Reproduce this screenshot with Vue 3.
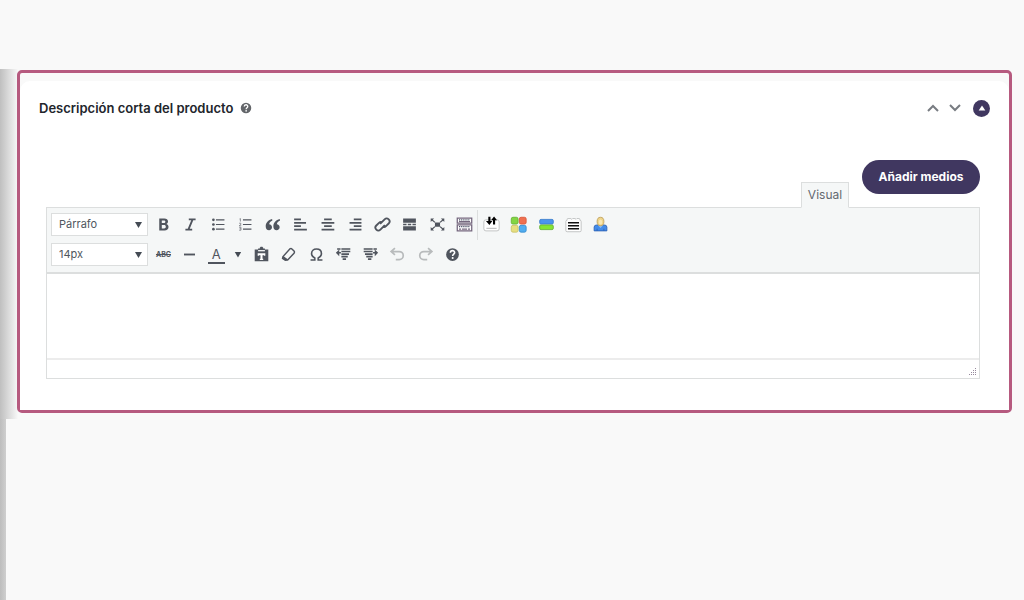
<script setup>
import { ref } from 'vue'

const format = ref('Párrafo')
const size = ref('14px')
const content = ref('')

const mainTools = [
  { id: 'bold', label: 'Negrita' },
  { id: 'italic', label: 'Cursiva' },
  { id: 'bullets', label: 'Lista con viñetas' },
  { id: 'numbers', label: 'Lista numerada' },
  { id: 'quote', label: 'Cita' },
  { id: 'left', label: 'Alinear a la izquierda' },
  { id: 'center', label: 'Centrar' },
  { id: 'right', label: 'Alinear a la derecha' },
  { id: 'link', label: 'Insertar enlace' },
  { id: 'more', label: 'Leer más' },
  { id: 'full', label: 'Pantalla completa' },
  { id: 'keyboard', label: 'Alternar barra' }
]
const extraTools = [
  { id: 'toggle', label: 'Acordeón' },
  { id: 'blocks', label: 'Bloques' },
  { id: 'bars', label: 'Botones' },
  { id: 'tabs', label: 'Pestañas' },
  { id: 'user', label: 'Autor' }
]
const textTools = [
  { id: 'strike', label: 'Tachado' },
  { id: 'line', label: 'Línea horizontal' }
]
const editTools = [
  { id: 'paste', label: 'Pegar como texto' },
  { id: 'eraser', label: 'Borrar formato' },
  { id: 'omega', label: 'Carácter especial' },
  { id: 'outdent', label: 'Reducir sangría' },
  { id: 'indent', label: 'Aumentar sangría' },
  { id: 'undo', label: 'Deshacer' },
  { id: 'redo', label: 'Rehacer' },
  { id: 'help', label: 'Ayuda' }
]

const shapes = {
  bold: '<path d="M5 3h6c2.600 0 4.300 1.200 4.300 3.500 0 1.500-.7 2.500-1.900 2.900 1.600.5 2.500 1.700 2.500 3.500 0 2.600-1.900 4.100-4.700 4.100H5zM8 5.300v3h2.300c1.200 0 1.900-.5 1.900-1.500s-.7-1.500-1.900-1.500zm0 5.200v4.100h2.700c1.300 0 2-.7 2-2s-.7-2.100-2-2.100z" fill="currentColor"/>',
  italic: '<path d="M8 4h8M4 16h8M12.500 4l-5 12" stroke="currentColor" stroke-width="2.200" fill="none"/>',
  bullets: '<path d="M7 4.500h10M7 10h10M7 15.500h10" stroke="currentColor" stroke-width="1.300"/><g fill="currentColor"><circle cx="4" cy="4.500" r="1.600"/><circle cx="4" cy="10" r="1.600"/><circle cx="4" cy="15.500" r="1.600"/></g>',
  numbers: '<path d="M7 4.500h10M7 10h10M7 15.500h10" stroke="currentColor" stroke-width="1.300"/><path d="M3 3.500l1-.5v3.500M2.500 8.500h2v1.400l-2 1.600H5M2.500 13.300h2.200v3.400H2.500M3 15h1.700" stroke="#7c8087" fill="none"/>',
  quote: '<path d="M9.500 3.500C5 4.500 2 8 2 12c0 2.800 1.500 4.700 3.900 4.700 2 0 3.500-1.500 3.500-3.500s-1.400-3.400-3.300-3.500c.3-2 1.600-3.400 3.800-4.400zM18.500 3.500C14 4.500 11 8 11 12c0 2.800 1.500 4.700 3.900 4.700 2 0 3.500-1.500 3.500-3.500s-1.400-3.400-3.300-3.500c.3-2 1.600-3.400 3.800-4.400z" fill="currentColor"/>',
  left: '<path d="M2.500 4h8M2.500 8h14M2.500 12h8M2.500 16h15" stroke="currentColor" stroke-width="2"/>',
  center: '<path d="M6 4h9M3 8h15M6 12h9M3 16h15" stroke="currentColor" stroke-width="2"/>',
  right: '<path d="M8 4h9M3 8h14M8 12h9M3 16h14" stroke="currentColor" stroke-width="2"/>',
  link: '<g transform="rotate(-45 10 10)" fill="none" stroke="currentColor" stroke-width="2.200"><path d="M11.500 12.500H4a3.400 3.400 0 0 1 0-6.800h4.500a3.400 3.400 0 0 1 3.300 2.500M8.500 7.500H16a3.400 3.400 0 0 1 0 6.800h-4.500a3.400 3.400 0 0 1-3.300-2.500"/></g>',
  more: '<path d="M2.500 3h15v5h-15zM2.500 12h15v5h-15z" fill="currentColor"/><path d="M2.500 10h4M8 10h4M13.500 10h4" stroke="currentColor" stroke-width="1.500"/>',
  full: '<path d="M7 7.500h6v5H7zM2 3h4L2 7zM18 3v4l-4-4zM2 17v-4l4 4zM18 17h-4l4-4z" fill="currentColor"/><path d="M3 4l4 3.500M17 4l-4 3.500M3 16l4-3.500M17 16l-4-3.500" stroke="currentColor" stroke-width="1.500"/>',
  keyboard: '<path d="M1.500 2.500h17v6h-17zM1.500 10.500h17v7h-17z" fill="#fff" stroke="#75677e" stroke-width="1.500"/><path d="M3.500 4.500h13M3.500 12.500h13" stroke="#4c5266" stroke-width="1.500" stroke-dasharray="1.500 1"/><path d="M3.500 6.700h13M3.500 15.500h2.500M7 15.500h6M14 15.500h2.500" stroke="#75677e" stroke-width="1.500"/>',
  toggle: '<rect x="1" y="4.500" width="18" height="13" rx="2.500" fill="#fff" stroke="#b9bcbc"/><path d="M4 14.500h12" stroke="#aaa"/><path d="M7.500 1v6M13 10V4" stroke="#000" stroke-width="2.500"/><path d="M3.500 6h7.500L7.500 10.500zM9.500 5h7L13 .5z" fill="#000"/>',
  blocks: '<rect x="1.500" y="1.500" width="8" height="8" rx="2" fill="#83d544" stroke="#64b332"/><rect x="11" y="1.500" width="8" height="8" rx="2" fill="#ef7050" stroke="#d95738"/><rect x="1.500" y="11" width="8" height="8" rx="2" fill="#e7df80" stroke="#c9c369"/><rect x="11" y="11" width="8" height="8" rx="2" fill="#50adf0" stroke="#358dce"/>',
  bars: '<rect x="2" y="4" width="16" height="5.500" rx="1.500" fill="#4a94ef" stroke="#367ccc"/><rect x="2" y="10.500" width="16" height="5.500" rx="1.500" fill="#85e533" stroke="#65af36"/>',
  tabs: '<path d="M1 6.500q0-1.500 1.500-1.500V4q0-1 1-1H7l1 1 1-1h3l1 1 1-1h2.500q1 0 1 1v1q1.500 0 1.500 1.500V17q0 1.500-1.500 1.500h-15Q1 18.500 1 17z" fill="#fff" stroke="#b9bcbc"/><path d="M3.500 8h13M3.500 11.500h13M3.500 15h13" stroke="#111" stroke-width="1.600"/>',
  user: '<path d="M2.500 17.500V13q0-2.500 3.500-2.500h8q3.500 0 3.500 2.500v4.500z" fill="#448ce9" stroke="#2d62b5"/><path d="M7 11l3 3 3-3" fill="#8ac0fa"/><path d="M6 15v2.500M14 15v2.500" stroke="#2d62b5"/><ellipse cx="10" cy="6.500" rx="4" ry="5" fill="#efd58a" stroke="#bd9e5a"/><ellipse cx="10" cy="7" rx="2" ry="3" fill="#fae8b5"/>',
  line: '<path d="M3.500 10h13" stroke="currentColor" stroke-width="2.200"/>',
  paste: '<path d="M2 4h4V3h2V2l1-1h2l1 1v1h2v1h4v14H2z" fill="currentColor"/><path d="M6 5.500h8" stroke="#f5f7f7" stroke-width="1.500"/><path d="M5.500 8.500h9v3H13V11h-1.800v4H12v1.500H8V15h.8v-4H7v.5H5.500z" fill="#fff"/>',
  eraser: '<path d="M3.500 12.500L11.500 3.500q1.500-1 2.500 0l2.500 2.500q1 1 0 2.500L9 16.500H6l-3-2z" fill="none" stroke="currentColor" stroke-width="1.700"/><path d="M3.500 11.500l6 4.500-3 1.500-3.500-3z" fill="currentColor"/>',
  omega: '<path d="M3 16.500h5V14C5.500 12.800 4.200 11 4.200 8.700c0-3 2.300-5.200 5.800-5.200s5.800 2.200 5.800 5.200c0 2.300-1.300 4.100-3.800 5.300v2.500h5" fill="none" stroke="currentColor" stroke-width="1.900"/>',
  outdent: '<path d="M7.500 3.500H18M7.500 6.500H18M7.500 9.500h9M7.500 12.500h7.500M9 15.500h4M3 8h4M2.500 3.500h4" stroke="currentColor" stroke-width="1.900"/><path d="M1 8l4-4v8z" fill="currentColor"/>',
  indent: '<path d="M2 3.500h10.500M2 6.500h10.500M3.500 9.500h9M5 12.500h7.500M7 15.500h4M13 8h4M13.500 3.500h4" stroke="currentColor" stroke-width="1.900"/><path d="M19 8l-4-4v8z" fill="currentColor"/>',
  undo: '<path d="M7 2.500l-4.500 4L7 10.500M3 6.500h9a4.700 4.700 0 0 1 0 9.500H8" fill="none" stroke="#b8bbbc" stroke-width="2"/>',
  redo: '<path d="M13 2.500l4.500 4-4.500 4M17 6.500H8A4.700 4.700 0 0 0 8 16h4" fill="none" stroke="#b8bbbc" stroke-width="2"/>',
  help: '<circle cx="10" cy="10" r="7.500" fill="currentColor"/><path d="M7.500 8c0-3.500 5-3.300 5-.3 0 2-2.300 1.900-2.300 4" fill="none" stroke="#fff" stroke-width="1.900"/><circle cx="10.200" cy="14" r="1.200" fill="#fff"/>'
}
</script>

<template>
  <main class="page">
    <section class="stage">
      <article class="frame">
        <div class="panel">
          <header class="heading">
            <h2>Descripción corta del producto</h2>
            <button class="hint" aria-label="Información">
              <svg viewBox="0 0 20 20" v-html="shapes.help"></svg>
            </button>
            <div class="order">
              <button aria-label="Subir"><svg viewBox="0 0 12 12"><path d="M1 9l5-5 5 5" /></svg></button>
              <button aria-label="Bajar"><svg viewBox="0 0 12 12"><path d="M1 3l5 5 5-5" /></svg></button>
              <button class="collapse" aria-label="Contraer"><svg viewBox="0 0 12 12"><path d="M6 3l4 6H2z" /></svg></button>
            </div>
          </header>

          <div class="editor">
            <div class="actions">
              <button class="tab">Visual</button>
              <button class="media">Añadir medios</button>
            </div>
            <div class="box">
              <div class="toolbar">
                <div class="row">
                  <label class="picker">
                    <select v-model="format" aria-label="Formato"><option>Párrafo</option></select>
                  </label>
                  <div class="tools main-tools">
                    <button v-for="tool in mainTools" :key="tool.id" :aria-label="tool.label">
                      <svg viewBox="0 0 20 20" v-html="shapes[tool.id]"></svg>
                    </button>
                  </div>
                  <div class="tools extra-tools">
                    <button v-for="tool in extraTools" :key="tool.id" :aria-label="tool.label">
                      <svg viewBox="0 0 20 20" v-html="shapes[tool.id]"></svg>
                    </button>
                  </div>
                </div>
                <div class="row">
                  <label class="picker">
                    <select v-model="size" aria-label="Tamaño"><option>14px</option></select>
                  </label>
                  <div class="tools text-tools">
                    <button v-for="tool in textTools" :key="tool.id" :aria-label="tool.label">
                      <s v-if="tool.id === 'strike'">ABC</s>
                      <svg v-else viewBox="0 0 20 20" v-html="shapes[tool.id]"></svg>
                    </button>
                    <button class="color" aria-label="Color de texto"><span>A</span></button>
                    <button class="drop" aria-label="Elegir color"><i></i></button>
                  </div>
                  <div class="tools edit-tools">
                    <button v-for="tool in editTools" :key="tool.id" :aria-label="tool.label">
                      <svg viewBox="0 0 20 20" v-html="shapes[tool.id]"></svg>
                    </button>
                  </div>
                </div>
              </div>
              <textarea v-model="content" aria-label="Descripción corta del producto"></textarea>
              <footer class="status">
                <svg viewBox="0 0 9 9"><path d="M7 1.500h1M5 3.500h1M7 3.500h1M3 5.500h1M5 5.500h1M7 5.500h1M1 7.500h1M3 7.500h1M5 7.500h1M7 7.500h1" /></svg>
              </footer>
            </div>
          </div>
        </div>
      </article>
    </section>
    <div class="below"></div>
  </main>
</template>

<style>
body { background: #f9f9f9; }
</style>

<style scoped>
* { box-sizing: border-box; }
button, select, textarea { font: inherit; color: inherit; margin: 0; padding: 0; border: 0; background: none; }
button { cursor: pointer; }
svg { display: block; }

.page {
  display: flex;
  flex-direction: column;
  min-height: 100vh;
  padding-top: 69px;
  font-family: Inter, "Open Sans", sans-serif;
  font-size: 12px;
  color: #50575e;
}
.stage {
  padding: 1px 12px 6px 17px;
  background: linear-gradient(to right, #bfbfbf, #f5f5f5 17px, #f9f9f9 18px);
}
.frame {
  padding-top: 8px;
  border: 3px solid #b65a7f;
  border-radius: 5px;
  background: #f9f9f9;
}
.panel { padding: 16px 19px 31px; border-radius: 10px 10px 0 0; background: #fff; }
.below { flex: 1; background: linear-gradient(to right, #bdbdbd, #cfcfcf 6px, #f9f9f9 6px); }

.heading { display: flex; align-items: center; height: 22px; }
h2 { margin: 0; font-size: 13px; line-height: 20px; font-weight: 600; color: #22252b; }
.hint { margin-left: 6px; color: #63666a; }
.hint svg { width: 14px; height: 14px; }
.order { display: flex; align-items: center; gap: 10px; margin-left: auto; }
.order svg { width: 12px; height: 12px; fill: none; stroke: #787c82; stroke-width: 2; }
.order .collapse { display: grid; place-items: center; width: 17px; height: 17px; margin-left: 2px; border-radius: 50%; background: #403760; }
.order .collapse svg { width: 10px; height: 10px; fill: #fff; stroke: none; }

.editor { padding: 41px 10px 0 7px; }
.actions { display: flex; justify-content: flex-end; align-items: flex-end; gap: 13px; height: 47px; }
.tab { height: 26px; width: 48px; margin-bottom: -1px; border: 1px solid #dcdede; border-bottom-color: #f5f7f7; background: #f5f7f7; line-height: 22px; color: #646970; }
.media { align-self: flex-start; width: 118px; height: 34px; padding-bottom: 1px; border-radius: 17px; background: #403760; color: #fff; font-weight: 700; }

.box { border: 1px solid #dcdede; }
.toolbar { display: grid; gap: 7px; padding: 5px 4px 6px; background: #f5f7f7; border-bottom: 2px solid #dcdede; }
.row { display: flex; align-items: center; height: 23px; }
.picker { position: relative; width: 97px; height: 23px; }
.picker select { appearance: none; width: 100%; height: 100%; padding: 0 7px 1px; border: 1px solid #dcdede; background: #fff; font-size: 11px; }
.picker::after {
  content: "";
  position: absolute;
  right: 6px;
  top: 9px;
  width: 7px;
  height: 6px;
  background: #444b54;
  clip-path: polygon(0 0, 100% 0, 50% 100%);
  pointer-events: none;
}
.tools { display: flex; justify-content: space-between; align-items: center; color: #50555e; }
.tools button { display: grid; place-items: center; width: 23px; height: 23px; }
.tools svg { width: 17px; height: 17px; }
.main-tools { width: 324px; margin-left: 4px; }
.extra-tools { width: 135px; height: 30px; margin: -4px 0 -4px 1px; padding-left: 2px; border-left: 1px solid #dcdede; }
.text-tools { width: 93px; margin-left: 4px; }
.tools .drop { width: 14px; }
.edit-tools { width: 214px; margin-left: 5px; }
s { font-size: 7px; font-weight: 700; }
.color span { width: 17px; border-bottom: 2px solid #50555e; font-size: 13px; line-height: 15px; padding-top: 1px; }
.drop i { width: 7px; height: 6px; background: #444b54; clip-path: polygon(0 0, 100% 0, 50% 100%); }
textarea { display: block; width: 100%; height: 84px; padding: 8px; resize: none; background: #fff; outline: 0; }
.status { display: flex; justify-content: flex-end; align-items: flex-end; height: 20px; padding: 2px; border-top: 2px solid #ececec; background: #fff; }
.status svg { width: 9px; height: 9px; fill: none; stroke: #96899c; }
</style>
